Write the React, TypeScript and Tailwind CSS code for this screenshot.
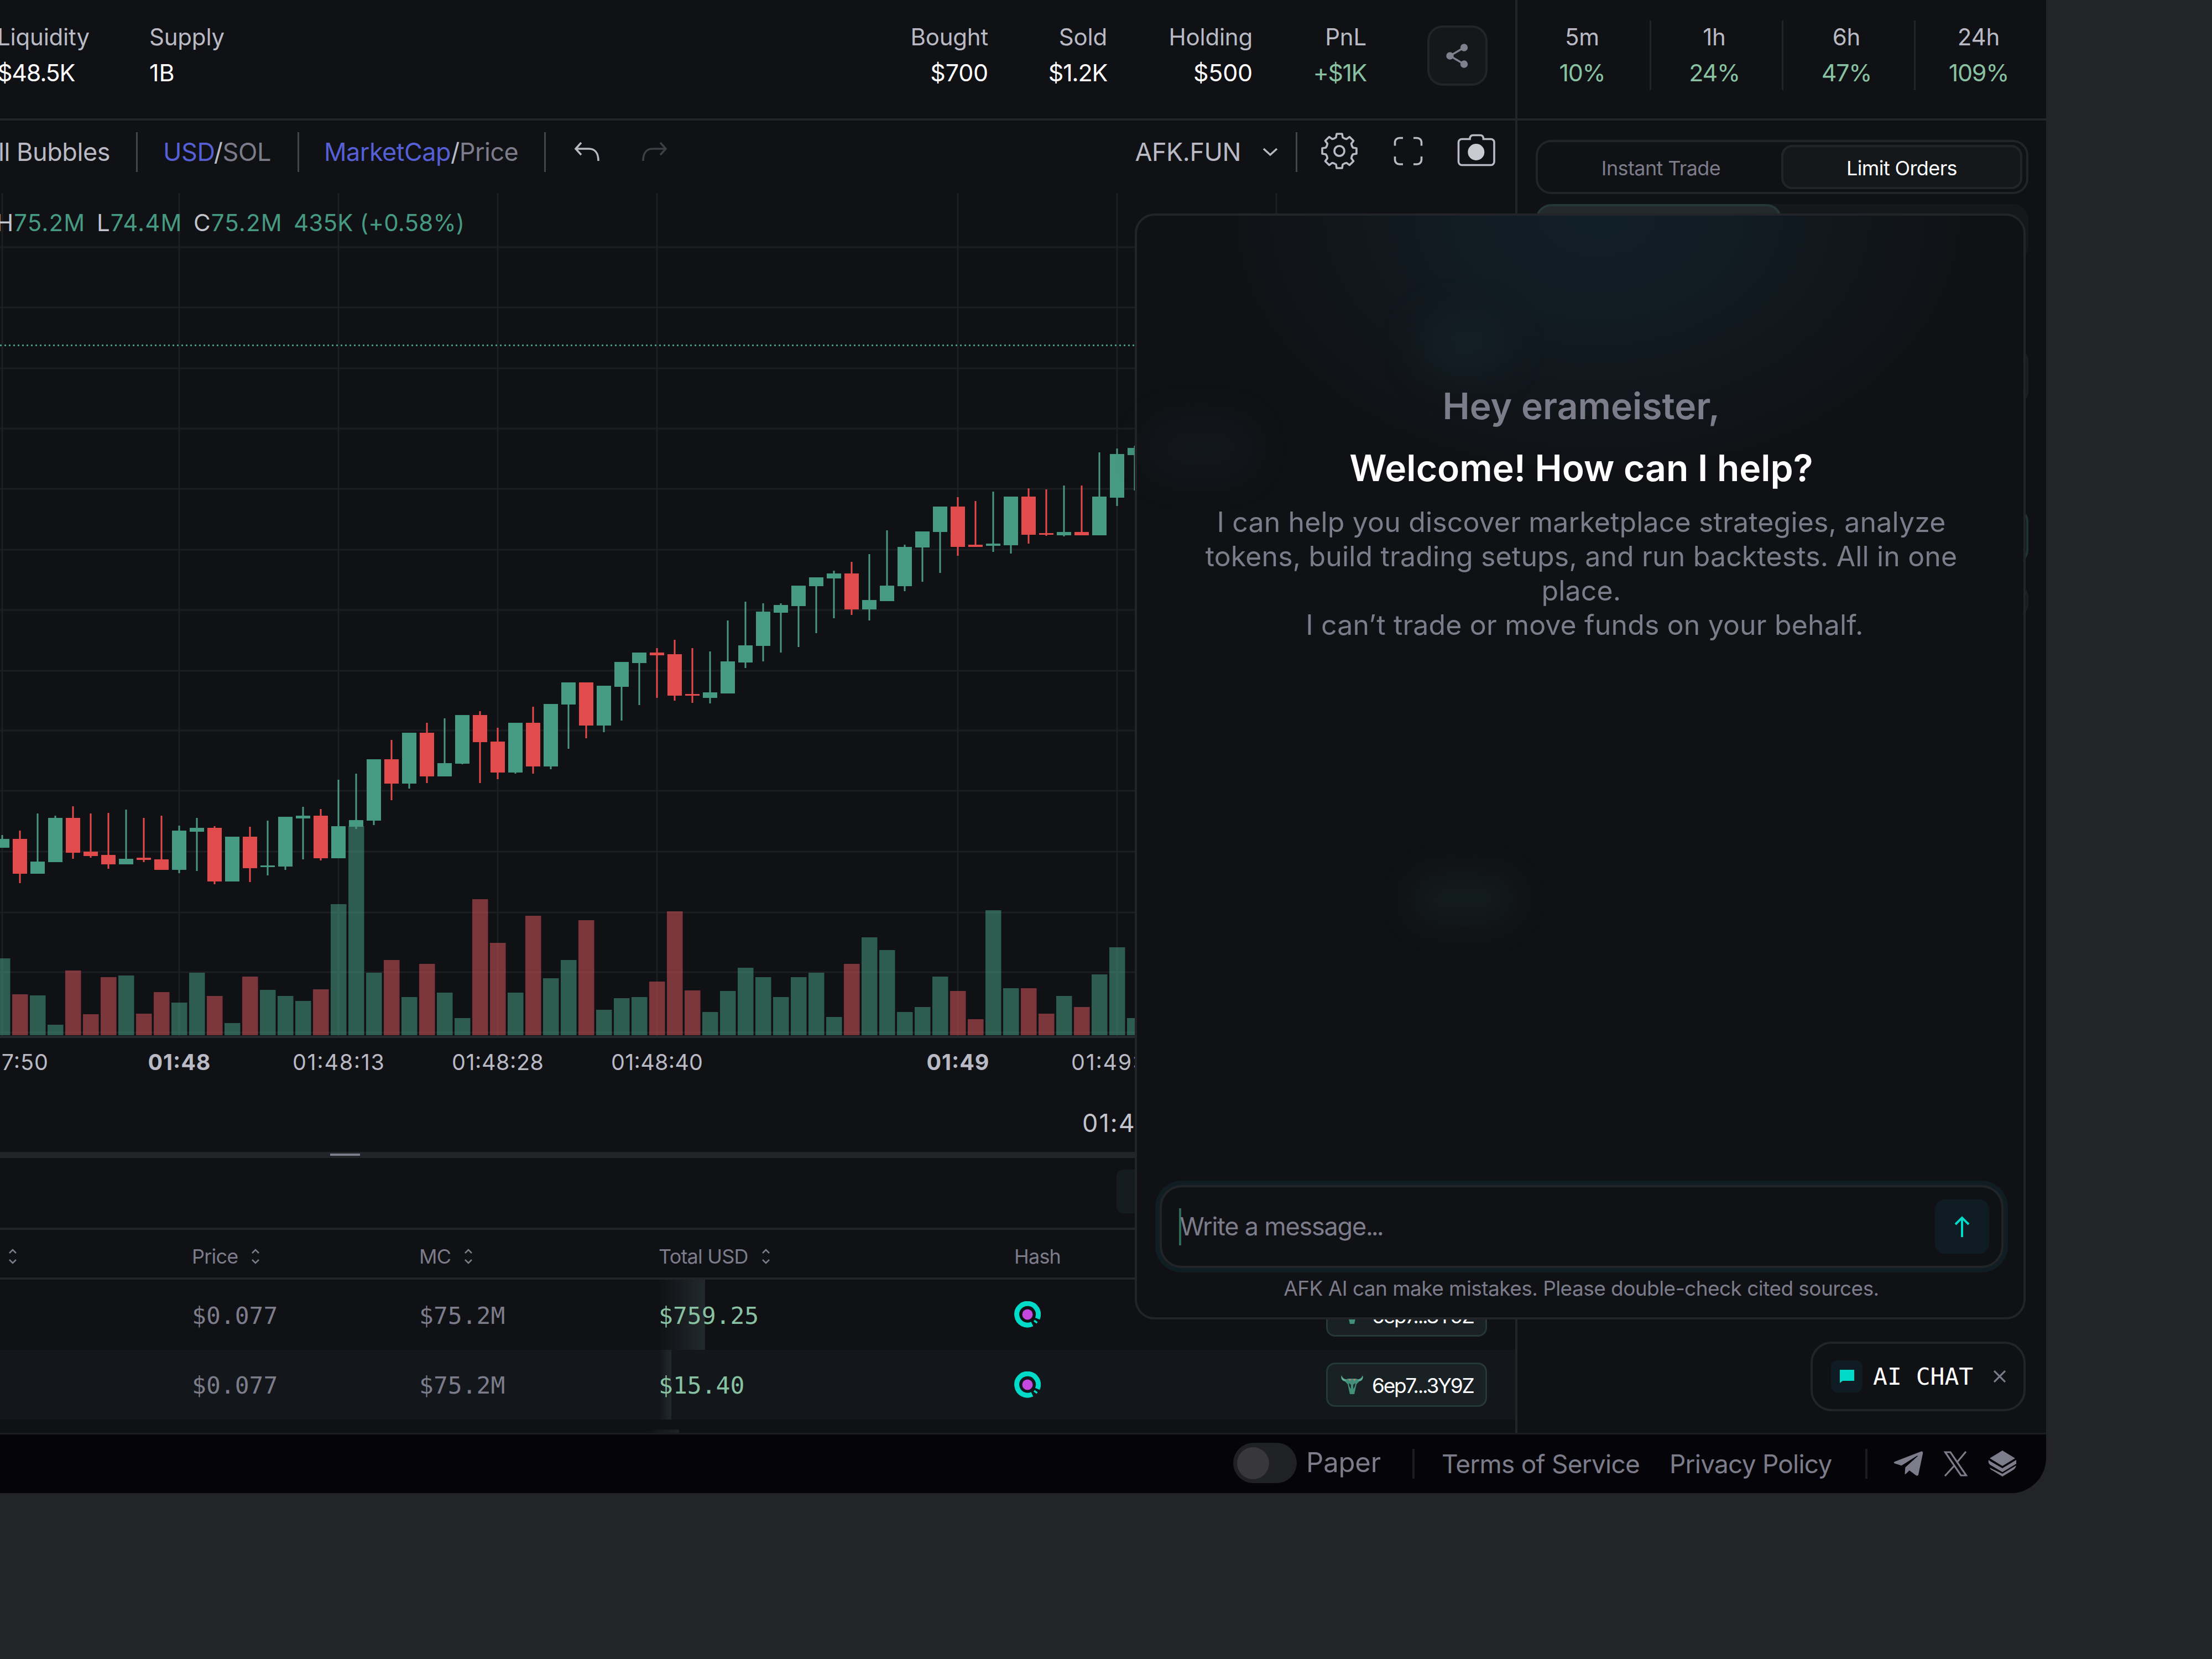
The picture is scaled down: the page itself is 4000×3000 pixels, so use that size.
import React from "react";
import { FaTelegramPlane } from "react-icons/fa";

type Side = "g" | "r";
// wickTop, bodyTop, bodyBottom, wickBottom, volumeTop
type Candle = [Side, number, number, number, number, number];

const STEP = 32;
const FIRST_X = 4;
const VOLUME_BASE = 1872;

const CANDLES: Candle[] = [
  ["g", 1510, 1517, 1533, 1533, 1733],
  ["r", 1502, 1517, 1580, 1597, 1798],
  ["g", 1471, 1558, 1580, 1580, 1800],
  ["g", 1475, 1479, 1559, 1559, 1853],
  ["r", 1458, 1479, 1542, 1553, 1755],
  ["r", 1471, 1540, 1548, 1551, 1834],
  ["r", 1470, 1546, 1563, 1571, 1767],
  ["g", 1464, 1553, 1563, 1563, 1764],
  ["r", 1479, 1551, 1555, 1559, 1833],
  ["r", 1475, 1554, 1573, 1573, 1794],
  ["g", 1493, 1502, 1573, 1579, 1813],
  ["g", 1479, 1497, 1504, 1575, 1759],
  ["r", 1494, 1497, 1594, 1599, 1801],
  ["g", 1513, 1513, 1594, 1594, 1850],
  ["r", 1495, 1513, 1570, 1595, 1766],
  ["g", 1484, 1565, 1568, 1583, 1790],
  ["g", 1477, 1477, 1567, 1573, 1801],
  ["g", 1459, 1475, 1480, 1554, 1810],
  ["r", 1463, 1475, 1552, 1556, 1789],
  ["g", 1410, 1494, 1552, 1552, 1635],
  ["g", 1399, 1483, 1495, 1499, 1494],
  ["g", 1373, 1373, 1484, 1492, 1759],
  ["r", 1338, 1373, 1417, 1447, 1736],
  ["g", 1325, 1325, 1417, 1426, 1803],
  ["r", 1307, 1325, 1404, 1416, 1743],
  ["g", 1299, 1380, 1404, 1404, 1795],
  ["g", 1293, 1293, 1381, 1382, 1841],
  ["r", 1286, 1293, 1342, 1416, 1626],
  ["r", 1316, 1341, 1397, 1409, 1705],
  ["g", 1307, 1307, 1397, 1399, 1795],
  ["r", 1278, 1307, 1386, 1399, 1656],
  ["g", 1273, 1273, 1386, 1391, 1769],
  ["g", 1234, 1234, 1274, 1354, 1736],
  ["r", 1234, 1234, 1312, 1335, 1664],
  ["g", 1240, 1240, 1312, 1324, 1826],
  ["g", 1197, 1197, 1242, 1303, 1805],
  ["g", 1180, 1180, 1199, 1275, 1803],
  ["r", 1172, 1180, 1185, 1262, 1775],
  ["r", 1157, 1183, 1258, 1267, 1648],
  ["r", 1172, 1255, 1258, 1271, 1791],
  ["g", 1178, 1252, 1262, 1272, 1830],
  ["g", 1122, 1196, 1254, 1254, 1792],
  ["g", 1088, 1167, 1198, 1208, 1750],
  ["g", 1091, 1106, 1168, 1196, 1767],
  ["g", 1091, 1094, 1108, 1180, 1803],
  ["g", 1059, 1059, 1096, 1170, 1767],
  ["g", 1044, 1044, 1060, 1145, 1759],
  ["g", 1032, 1037, 1046, 1118, 1839],
  ["r", 1016, 1037, 1102, 1112, 1743],
  ["g", 1002, 1085, 1102, 1122, 1695],
  ["g", 959, 1059, 1087, 1087, 1718],
  ["g", 985, 989, 1060, 1069, 1830],
  ["g", 961, 961, 990, 1052, 1821],
  ["g", 916, 916, 962, 1036, 1766],
  ["r", 899, 916, 989, 1005, 1792],
  ["r", 906, 985, 989, 989, 1843],
  ["g", 889, 983, 987, 998, 1646],
  ["g", 898, 898, 986, 1001, 1787],
  ["r", 883, 898, 967, 983, 1787],
  ["r", 885, 964, 967, 969, 1833],
  ["g", 878, 962, 968, 970, 1801],
  ["r", 878, 962, 968, 968, 1821],
  ["g", 818, 898, 968, 968, 1762],
  ["g", 811, 821, 900, 915, 1713],
  ["g", 806, 810, 823, 887, 1841],
];

const GRID_X = [4, 324, 612, 900, 1188, 1732, 2020, 2308];
const GRID_Y = [447, 556, 666, 775, 884, 994, 1103, 1213, 1321, 1430, 1540, 1650, 1758, 1867];

const TIME_LABELS = [
  { x: 4, text: "01:47:50", bold: false },
  { x: 324, text: "01:48", bold: true },
  { x: 612, text: "01:48:13", bold: false },
  { x: 900, text: "01:48:28", bold: false },
  { x: 1188, text: "01:48:40", bold: false },
  { x: 1732, text: "01:49", bold: true },
  { x: 2020, text: "01:49:12", bold: false },
];

const POSITION = [
  { label: "Bought", value: "$700", width: "w-[160px]", color: "text-white tracking-[-0.005em]" },
  { label: "Sold", value: "$1.2K", width: "w-[215px]", color: "text-white tracking-[-0.03em]" },
  { label: "Holding", value: "$500", width: "w-[263px]", color: "text-white tracking-[-0.005em]" },
  { label: "PnL", value: "+$1K", width: "w-[206px]", color: "text-[#88c2a2] tracking-[-0.035em]" },
];

const CHANGES = [
  { label: "5m", value: "10%" },
  { label: "1h", value: "24%" },
  { label: "6h", value: "47%" },
  { label: "24h", value: "109%" },
];

const TRADES = [
  { price: "$0.077", mc: "$75.2M", total: "$759.25", wallet: "6ep7...3Y9Z", bar: 82, alt: false },
  { price: "$0.077", mc: "$75.2M", total: "$15.40", wallet: "6ep7...3Y9Z", bar: 21, alt: true },
];

function gearPath(cx: number, cy: number) {
  const pts: string[] = [];
  for (let i = 0; i < 8; i++) {
    const a = (i * Math.PI) / 4;
    const corners = [
      [22.5, -9.5],
      [24.5, -6],
      [31, -5],
      [31, 5],
      [24.5, 6],
      [22.5, 9.5],
    ];
    corners.forEach(([r, o]) => {
      const x = cx + r * Math.cos(a) - o * Math.sin(a);
      const y = cy + r * Math.sin(a) + o * Math.cos(a);
      pts.push(`${x.toFixed(1)} ${y.toFixed(1)}`);
    });
  }
  return `M${pts.join("L")}Z`;
}

function Stat({ label, value, className, color }: { label: string; value: string; className?: string; color: string }) {
  return (
    <div className={className}>
      <div className="h-[65px] text-[42px] leading-[65px] tracking-[-0.005em] text-[#b9bac4]">{label}</div>
      <div className={`h-[65px] text-[43px] leading-[65px] ${color}`}>{value}</div>
    </div>
  );
}

function ShareIcon() {
  return (
    <svg className="h-[54px] w-[54px]" viewBox="0 0 54 54" fill="#80808e" stroke="#80808e" strokeWidth="3.500">
      <path d="M38.500 12L13 27l25.500 15" fill="none" />
      <circle cx="13" cy="27" r="5" />
      <circle cx="38.500" cy="12" r="5" />
      <circle cx="38.500" cy="42" r="5" />
    </svg>
  );
}

function SortIcon() {
  return (
    <svg className="h-[28px] w-[16px]" viewBox="0 0 16 28" fill="none" stroke="#7c7c8a" strokeWidth="2.600">
      <path d="M2 8l6-6 6 6M2 20l6 6 6-6" />
    </svg>
  );
}

function HashIcon() {
  return (
    <svg className="h-[48px] w-[48px]" viewBox="0 0 48 48" fill="none">
      <path d="M32.500 41.300A19.500 19.500 0 1 1 42 31.500" stroke="#00dbc9" strokeWidth="9" />
      <circle cx="24" cy="24" r="9.500" fill="#c548e0" />
      <path d="M36 35l5.500 4" stroke="#00dbc9" strokeWidth="3.500" />
    </svg>
  );
}

function BullIcon() {
  return (
    <svg className="h-[34px] w-[40px]" viewBox="0 0 40 34">
      <path d="M1 0c-2 6 1 11 8 11l5-1-1-3C7 8 3 6 1 0zM39 0c2 6-1 11-8 11l-5-1 1-3c6 1 10-1 12-7z" fill="#5fae93" />
      <path d="M12 6h16l5 5-5 5-2 9-2 9h-8l-2-9-2-9-5-5z" fill="#439079" />
      <path d="M14 14l4 3v8l-3-5zM26 14l-4 3v8l3-5z" fill="#1c2a2b" />
      <circle cx="16" cy="8" r="1.500" fill="#d9776f" />
      <circle cx="24" cy="8" r="1.500" fill="#d9776f" />
    </svg>
  );
}

function Header() {
  return (
    <div className="flex h-[218px] shrink-0 border-b-4 border-[#232428]">
      <div className="flex w-[2740px] shrink-0 pt-[34px]">
        <Stat label="Liquidity" value="$48.5K" color="text-white tracking-[-0.03em]" className="-ml-[5px] w-[275px] shrink-0" />
        <Stat label="Supply" value="1B" color="text-white" />
        <div className="ml-auto flex text-right">
          {POSITION.map((p) => (
            <Stat key={p.label} label={p.label} value={p.value} color={p.color} className={p.width} />
          ))}
        </div>
        <div className="mt-[12px] mr-[50px] ml-[110px] flex h-[109px] w-[109px] items-center justify-center rounded-[28px] border-4 border-[#232428] bg-[#14181b]">
          <ShareIcon />
        </div>
      </div>
      <div className="flex w-[960px] border-l-4 border-[#232428] pt-[34px]">
        {CHANGES.map((c, i) => (
          <div key={c.label} className="relative flex-1 pr-[5px] text-center">
            {i > 0 && <div className="absolute top-[3px] left-0 h-[126px] w-[3px] bg-[#232428]" />}
            <Stat label={c.label} value={c.value} color="text-[#88c2a2] tracking-[-0.03em]" />
          </div>
        ))}
      </div>
    </div>
  );
}

function Separator() {
  return <div className="h-[72px] w-[3px] shrink-0 bg-[#43454a]" />;
}

function Toolbar() {
  return (
    <div className="relative z-10 flex h-[114px] shrink-0 items-center text-[45px] whitespace-nowrap text-[#b9bac4]">
      <div className="flex w-[246px] shrink-0 justify-end pr-[47px] tracking-[-0.01em]">ll Bubbles</div>
      <Separator />
      <div className="w-[289px] pl-[46px] tracking-[-0.01em]">
        <span className="text-[#5660d6]">USD</span>/<span className="text-[#7c7c8a]">SOL</span>
      </div>
      <Separator />
      <div className="w-[443px] pl-[45px] tracking-[-0.012em]">
        <span className="text-[#5660d6]">MarketCap</span>/<span className="text-[#7c7c8a]">Price</span>
      </div>
      <Separator />
      <svg className="ml-[50px] h-[38px] w-[48px]" viewBox="0 0 48 38" fill="none" stroke="#b9bac4" strokeWidth="3.500">
        <path d="M14 2L4 13l10 11M4 13h24c10 0 17 7 17 22" />
      </svg>
      <svg className="ml-[75px] h-[38px] w-[48px]" viewBox="0 0 48 38" fill="none" stroke="#3f4045" strokeWidth="3.500">
        <path d="M34 2l10 11-10 11M44 13H20C10 13 3 20 3 35" />
      </svg>
      <div className="ml-auto tracking-[-0.01em]">AFK.FUN</div>
      <svg className="ml-[39px] h-[16px] w-[28px]" viewBox="0 0 28 16" fill="none" stroke="#b9bac4" strokeWidth="3.500">
        <path d="M2 2l12 11L26 2" />
      </svg>
      <div className="ml-[32px]">
        <Separator />
      </div>
      <svg className="mr-[30px] ml-[40px] h-[72px] w-[324px]" viewBox="2386 239 324 72" fill="none" stroke="#b9bac4" strokeWidth="3.600">
        <path d={gearPath(2422, 273)} strokeLinejoin="round" />
        <circle cx="2422" cy="273" r="9" />
        <path d="M2522.500 263.500v-6a8 8 0 0 1 8-8h6.500M2556 249.500h6.500a8 8 0 0 1 8 8v6M2522.500 283v6a8 8 0 0 0 8 8h6.500M2556 297h6.500a8 8 0 0 0 8-8v-6" />
        <path d="M2643.500 251.500h14.500q0-7 6-7h12.500q6 0 6 7H2696a6 6 0 0 1 6 6v35a6 6 0 0 1-6 6h-52.500a6 6 0 0 1-6-6v-35a6 6 0 0 1 6-6z" />
        <circle cx="2669.300" cy="275" r="15" fill="#c9cad2" stroke="none" />
      </svg>
    </div>
  );
}

function Chart() {
  return (
    <svg className="block h-[1751px] w-[2740px] shrink-0" viewBox="0 332 2740 1751">
      <g fill="#1c1e22">
        {GRID_X.map((x) => (
          <rect key={x} x={x - 1.5} y="349" width="3" height="1524" />
        ))}
        {GRID_Y.map((y) => (
          <rect key={y} x="0" y={y - 1.5} width="2740" height="3" />
        ))}
      </g>
      <line x1="0" x2="2740" y1="624.500" y2="624.500" stroke="#479a82" strokeWidth="3" strokeDasharray="3 5" />
      {CANDLES.map(([side, , , , , top], i) => (
        <rect
          key={i}
          x={FIRST_X + i * STEP - 14}
          y={top}
          width="28.500"
          height={VOLUME_BASE - top}
          fill={side === "g" ? "#479a82" : "#e35b60"}
          fillOpacity={side === "g" ? 0.55 : 0.51}
        />
      ))}
      {CANDLES.map(([side, high, top, bottom, low], i) => {
        const x = FIRST_X + i * STEP;
        return (
          <g key={i} fill={side === "g" ? "#479a82" : "#e14b4b"}>
            <rect x={x - 1.5} y={high} width="3" height={low - high} />
            <rect x={x - 13} y={top} width="26" height={bottom - top} />
          </g>
        );
      })}
      <rect x="0" y="1873" width="2740" height="4" fill="#232b2e" />
      <g fontSize="39.500" fill="#b9bac4" textAnchor="middle" fontFamily="Inter, sans-serif">
        {TIME_LABELS.map((t) => (
          <text key={t.x} x={t.x} y="1935" fontWeight={t.bold ? 700 : 400} textLength={t.bold ? 113 : 166}>
            {t.text}
          </text>
        ))}
      </g>
      <text x="1957" y="2047" fontSize="45" letterSpacing="2" fill="#c3c4cc" fontFamily="Inter, sans-serif">
        01:4
      </text>
      <text x="-7" y="418" fontSize="42" letterSpacing="1.100" fill="#c3c4cc" fontFamily="Inter, sans-serif">
        H<tspan fill="#479a82">75.2M</tspan>
        <tspan x="175">L</tspan>
        <tspan fill="#479a82">74.4M</tspan>
        <tspan x="350">C</tspan>
        <tspan fill="#479a82">75.2M</tspan>
        <tspan x="531" fill="#479a82" letterSpacing="0.200">
          435K (+0.58%)
        </tspan>
      </text>
    </svg>
  );
}

function HeadCell({ label, sort = true }: { label: string; sort?: boolean }) {
  return (
    <div className="flex items-center gap-6">
      <span className="text-[36px] tracking-[-0.022em]">{label}</span>
      {sort && <SortIcon />}
    </div>
  );
}

function TradesTable() {
  return (
    <>
      <div className="flex h-[11px] shrink-0 justify-center bg-[#232428] pr-[1492px]">
        <div className="mt-[3px] h-[4px] w-[54px] bg-[#7c7c8a]" />
      </div>
      <div className="flex h-[130px] shrink-0 items-start justify-end border-b-4 border-[#232428] pt-[21px]">
        <div className="mr-[520px] h-[79px] w-[201px] rounded-[12px] bg-[#151c20]" />
      </div>
      <div className="grid h-[90px] shrink-0 grid-cols-[347px_411px_433px_643px_1fr] items-center border-b-4 border-[#232428] pt-[9px] text-[#7c7c8a]">
        <div className="pl-[15px]">
          <SortIcon />
        </div>
        <HeadCell label="Price" />
        <HeadCell label="MC" />
        <HeadCell label="Total USD" />
        <HeadCell label="Hash" sort={false} />
      </div>
      {TRADES.map((t, i) => (
        <div
          key={i}
          className={`grid h-[126.500px] shrink-0 grid-cols-[347px_411px_433px_643px_1fr] items-center font-['DejaVu_Sans_Mono',monospace] text-[43px] text-[#7c7c8a] ${t.alt ? "bg-[#13171b]" : ""}`}
        >
          <div />
          <div className="pt-[3px]">{t.price}</div>
          <div className="pt-[3px]">{t.mc}</div>
          <div className="relative flex h-full items-center text-[#88c2a2]">
            <div
              className="absolute inset-y-0 left-[2px] bg-gradient-to-r from-transparent to-[#22292c]"
              style={{ width: t.bar }}
            />
            <span className="relative pt-[3px]">{t.total}</span>
          </div>
          <div className="flex items-center justify-between pr-[51px]">
            <HashIcon />
            <div className="flex h-[80px] w-[291px] items-center gap-4 rounded-[16px] border-[3px] border-[#26393a] bg-[#1a2125] pl-[24px]">
              <BullIcon />
              <span className="pt-[4px] font-['Inter',sans-serif] text-[37px] tracking-[-0.062em] text-white">{t.wallet}</span>
            </div>
          </div>
        </div>
      ))}
      <div className="flex flex-1 items-end pl-[1172px]">
        <div className="h-[6px] w-[56px] bg-gradient-to-r from-transparent to-[#1f2325]" />
      </div>
    </>
  );
}

function OrderPanel() {
  return (
    <div className="flex w-[960px] shrink-0 flex-col border-l-4 border-[#232428] pr-[32px] pl-[33px]">
      <div className="mt-[35px] flex h-[98px] shrink-0 items-center rounded-[28px] border-4 border-[#232428] pr-[7px] text-[36px] tracking-[-0.017em]">
        <div className="flex-1 pt-[4px] pl-[5px] text-center text-[#7c7c8a]">Instant Trade</div>
        <div className="flex h-[80px] w-[436px] items-center justify-center rounded-[20px] border-4 border-[#232428] bg-[#14181b] pt-[4px] text-white">
          Limit Orders
        </div>
      </div>
      <div className="mt-[18px] flex h-[105px] shrink-0 rounded-[28px] bg-[#14181b]">
        <div className="w-[445px] rounded-[28px] border-4 border-[#26373a] bg-[#23282b]" />
      </div>
      <div className="mt-[156px] h-[101px] shrink-0 rounded-[24px] border-4 border-[#1c1f22]" />
      <div className="mt-[188px] h-[100px] shrink-0 rounded-[24px] border-4 border-[#1d3434]" />
      <div className="mt-[37px] h-[60px] shrink-0 rounded-[24px] border-4 border-[#1c1f22]" />
    </div>
  );
}

function ChatPanel() {
  return (
    <div className="absolute top-[386px] left-[2052px] z-20 flex h-[2000px] w-[1611px] flex-col items-center rounded-[36px] border-4 border-[#232428] bg-[#101115] bg-[radial-gradient(ellipse_680px_480px_at_52%_0%,#111f27_0%,#111c23_35%,#101115_100%)] pr-[34px] pl-[38px]">
      <div className="absolute top-[180px] left-[510px] h-[110px] w-[160px] rounded-full bg-[#16262c] opacity-50 blur-[32px]" />
      <div className="absolute top-[370px] left-[20px] h-[100px] w-[190px] rounded-full bg-[#13191e] opacity-80 blur-[30px]" />
      <div className="absolute top-[1190px] left-[495px] h-[90px] w-[190px] rounded-full bg-[#15201f] opacity-70 blur-[26px]" />
      <div className="relative mt-[288px] text-[66px] leading-[112px] font-semibold text-[#7c7c8a]">
        Hey erameister,
      </div>
      <div className="relative text-[66px] leading-[112px] font-semibold text-white">Welcome! How can I help?</div>
      <div className="relative mt-[11px] text-center text-[50px] leading-[62px] tracking-[0.003em] whitespace-nowrap text-[#7c7c8a]">
        <div>I can help you discover marketplace strategies, analyze</div>
        <div>tokens, build trading setups, and run backtests. All in one</div>
        <div>place.</div>
        <div className="pl-3">I can’t trade or move funds on your behalf.</div>
      </div>
      <div className="relative mt-auto flex h-[150px] w-[1526px] shrink-0 items-center rounded-[40px] border-4 border-[#232428] bg-[#101115] pr-[22px] pl-[31px] ring-8 ring-[#101e24]">
        <div className="h-[67px] w-[4px] bg-[#2f6a58]" />
        <div className="-ml-[2px] text-[45px] tracking-[-0.027em] text-[#7c7c8a]">
          Write a message<span className="tracking-[-0.07em]">...</span>
        </div>
        <div className="ml-auto flex h-[98px] w-[98px] items-center justify-center rounded-[18px] bg-[#101c23]">
          <svg className="h-[38px] w-[28px]" viewBox="0 0 28 38" fill="none" stroke="#00dbc9" strokeWidth="4">
            <path d="M14 38V3M2 15L14 3l12 12" />
          </svg>
        </div>
      </div>
      <div className="mt-[11px] mb-[26px] text-[37px] leading-[52px] tracking-[-0.015em] whitespace-nowrap text-[#7c7c8a]">
        AFK AI can make mistakes. Please double-check cited sources.
      </div>
    </div>
  );
}

function ChatPill() {
  return (
    <div className="absolute top-[2426px] left-[3274px] z-20 flex h-[126px] w-[389px] items-center rounded-[38px] border-4 border-[#232428] bg-[#101115] pl-[33px]">
      <div className="flex h-[58px] w-[57px] items-center justify-center rounded-[12px] bg-[#101c23]">
        <svg className="h-[26px] w-[26px]" viewBox="0 0 26 26">
          <path d="M0 1h26v20H5l-5 4z" fill="#00dbc9" />
        </svg>
      </div>
      <span className="ml-[19px] font-['DejaVu_Sans_Mono',monospace] text-[43px] text-white">AI CHAT</span>
      <svg className="ml-[37px] h-[22px] w-[22px]" viewBox="0 0 22 22" stroke="#7c7c8a" strokeWidth="3.200">
        <path d="M1 1l20 20M21 1L1 21" />
      </svg>
    </div>
  );
}

function Footer() {
  return (
    <div className="flex h-[109px] shrink-0 items-center justify-end border-t-[3px] border-[#1b1d21] bg-[#040409] pr-[53px] text-[46px] tracking-[-0.017em] whitespace-nowrap text-[#7c7c8a]">
      <div className="mb-[3px] flex h-[73px] w-[115px] items-center rounded-full bg-[#202125] pl-[7px]">
        <div className="h-[58px] w-[58px] rounded-full bg-[#38383c]" />
      </div>
      <div className="mb-[5px] ml-[17px] w-[192px] text-[49px] tracking-[-0.003em]">Paper</div>
      <div className="h-[54px] w-[4px] bg-[#1b1d21]" />
      <div className="ml-[49px] w-[412px]">Terms of Service</div>
      <div className="w-[354px]">Privacy Policy</div>
      <div className="h-[54px] w-[4px] bg-[#1b1d21]" />
      <FaTelegramPlane className="ml-[47px] h-[60px] w-[54px]" />
      <svg className="ml-[37px] h-[46px] w-[43px]" viewBox="0 0 43 46" fill="none" stroke="#7c7c8a" strokeWidth="3.200">
        <path d="M2.500 2h9.500l28.500 42H31zM40 1L25 19M18.500 27L2 45" />
      </svg>
      <svg className="ml-[37px] h-[48px] w-[52px]" viewBox="0 0 52 48" fill="#7c7c8a">
        <path d="M26 0l23 14-23 14L3 14z" />
        <path d="M1 17c-1 4 0 7 3 9l22 13 25-15v-7L26 32 5 20z" />
        <path d="M3 31c1 3 3 4 5 5l18 11 18-11c4-2 6-5 7-9L26 42z" />
      </svg>
    </div>
  );
}

export default function App() {
  return (
    <div className="h-[3000px] w-[4000px] overflow-hidden bg-[#232428] font-['Inter',sans-serif]">
      <div className="relative flex h-[2700px] w-[3700px] flex-col overflow-hidden rounded-br-[64px] bg-[#101115]">
        <Header />
        <div className="flex h-[2373px] shrink-0">
          <div className="flex w-[2740px] shrink-0 flex-col">
            <Toolbar />
            <Chart />
            <TradesTable />
          </div>
          <OrderPanel />
        </div>
        <Footer />
        <ChatPanel />
        <ChatPill />
      </div>
    </div>
  );
}
